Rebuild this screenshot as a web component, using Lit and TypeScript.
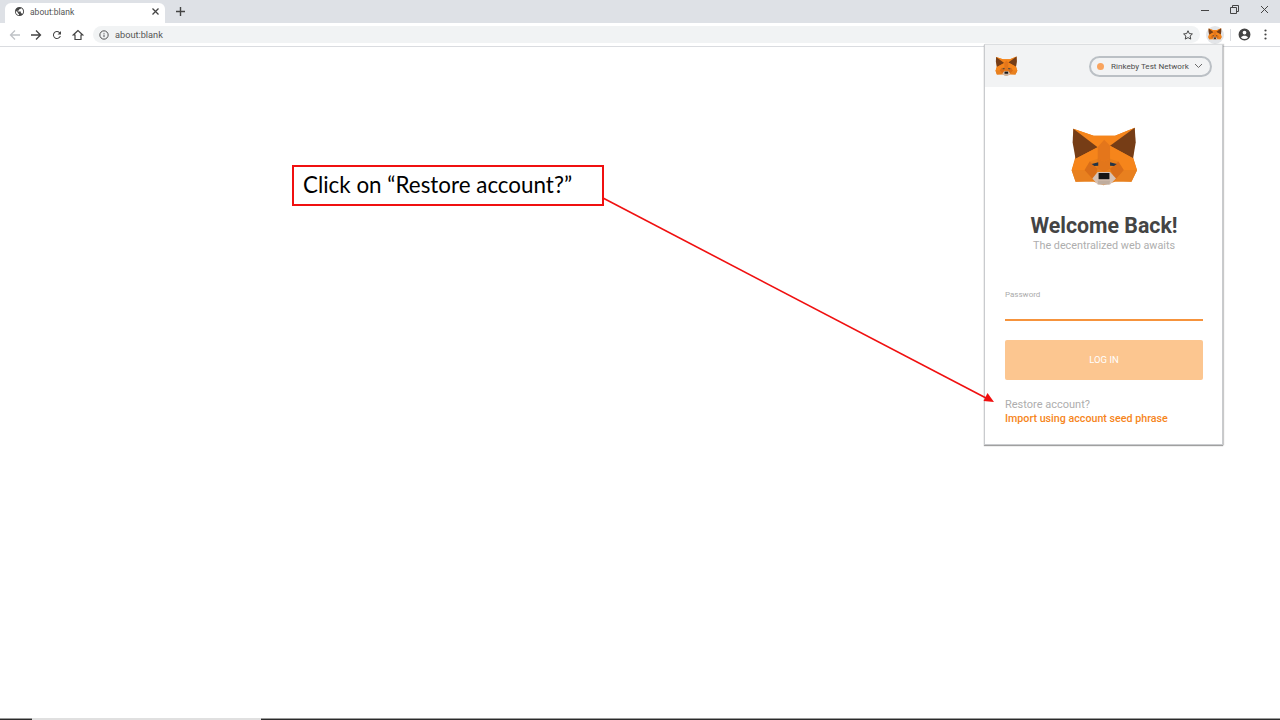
import { LitElement, html, css, svg } from "lit";
import { customElement, property } from "lit/decorators.js";

const foxShapes = svg`
  <polygon fill="#e8801c" points="38,28 100,50 165,50 225,25 220,115 232,155 215,190 165,190 130,200 100,190 45,190 33,155 44,115"/>
  <polygon fill="#f6851b" points="38,28 100,50 165,50 225,25 150,80 150,120 132,128 112,120 112,85"/>
  <polygon fill="#763d16" points="38,28 112,85 45,120 36,70"/>
  <polygon fill="#763d16" points="225,25 150,80 220,118 228,70"/>
  <polygon fill="#e4761b" points="112,85 112,120 132,128 150,120 150,80 132,62"/>
  <polygon fill="#f6851b" points="45,120 112,85 112,120 88,128 72,155 33,155"/>
  <polygon fill="#f6851b" points="220,118 150,80 150,120 175,128 192,155 232,155"/>
  <polygon fill="#d96d18" points="72,155 88,128 112,150 100,185"/>
  <polygon fill="#d96d18" points="192,155 175,128 150,150 165,185"/>
  <polygon fill="#e8801f" points="33,155 72,155 100,185 45,190"/>
  <polygon fill="#e8801f" points="232,155 192,155 165,185 215,190"/>
  <polygon fill="#e2761b" points="112,120 132,128 150,120 150,150 132,160 112,150"/>
  <polygon fill="#233447" points="94,136 114,130 114,141 102,142"/>
  <polygon fill="#233447" points="170,136 150,130 150,141 162,142"/>
  <polygon fill="#d7c1b3" points="96,180 112,160 150,160 168,180 150,198 112,198"/>
  <polygon fill="#161616" points="115,163 148,163 148,182 115,182"/>
  <polygon fill="#c0ad9e" points="112,186 150,186 148,198 114,198"/>
`;

@customElement("fox-logo")
class FoxLogo extends LitElement {
  @property({ type: Number }) size = 22;
  static styles = css`
    :host { display: flex; }
  `;
  render() {
    return html`<svg viewBox="28 20 210 185" width=${this.size} height=${(this.size * 185) / 210}>${foxShapes}</svg>`;
  }
}

@customElement("mm-popup")
class MmPopup extends LitElement {
  static styles = css`
    :host {
      display: flex;
      flex-direction: column;
      width: 239px;
      height: 401px;
      box-sizing: border-box;
      background: #fff;
      border: 1px solid #c9cbce;
      border-top-color: #dcdee0;
      box-shadow: 0 1px 1px 0 rgba(90, 90, 90, 0.55), 1px 0 1px 0 rgba(90, 90, 90, 0.25);
      font-family: Roboto, "Liberation Sans", sans-serif;
    }
    .head {
      height: 42px;
      background: #f2f3f4;
      display: flex;
      align-items: center;
      justify-content: space-between;
      padding: 0 10px 0 10px;
    }
    .net {
      width: 123px;
      height: 21px;
      box-sizing: border-box;
      border: 2px solid #bbc0c5;
      border-radius: 11px;
      display: flex;
      align-items: center;
      padding-left: 6px;
      font-size: 8.1px;
      color: #4d4d4d;
      white-space: nowrap;
    }
    .dot {
      width: 7px;
      height: 7px;
      border-radius: 50%;
      background: #f9a45e;
      margin-right: 7px;
      flex: none;
    }
    .net svg { margin: 0 7px 0 auto; flex: none; }
    .body {
      flex: 1;
      display: flex;
      flex-direction: column;
      padding: 0 19px 0 20px;
    }
    .big { align-self: center; margin-top: 39px; }
    h1 {
      margin: 26px 0 0;
      font-size: 21.3px;
      line-height: 26px;
      font-weight: 700;
      color: #444;
      text-align: center;
      white-space: nowrap;
    }
    .sub {
      font-size: 10.8px;
      line-height: 14px;
      color: #aeaeae;
      text-align: center;
      white-space: nowrap;
    }
    .label {
      margin-top: 37px;
      font-size: 8px;
      line-height: 10px;
      color: #aaa;
    }
    .line {
      margin-top: 19px;
      height: 2px;
      background: #f6933c;
    }
    .btn {
      margin-top: 19px;
      height: 40px;
      border-radius: 2px;
      background: #fcc690;
      color: #fff;
      font-size: 9.5px;
      display: flex;
      align-items: center;
      justify-content: center;
    }
    .restore {
      margin-top: 18px;
      font-size: 11px;
      line-height: 14px;
      color: #aeaeae;
    }
    .import {
      font-size: 10.7px;
      line-height: 14px;
      font-weight: 500;
      color: #f6851b;
      white-space: nowrap;
    }
  `;
  render() {
    return html`
      <div class="head">
        <fox-logo size="23"></fox-logo>
        <div class="net">
          <span class="dot"></span>Rinkeby Test Network
          <svg width="9" height="6" viewBox="0 0 9 6"><path d="M1 1l3.5 3.5L8 1" fill="none" stroke="#6a6a6a" stroke-width="1"/></svg>
        </div>
      </div>
      <div class="body">
        <fox-logo class="big" size="69"></fox-logo>
        <h1>Welcome Back!</h1>
        <div class="sub">The decentralized web awaits</div>
        <div class="label">Password</div>
        <div class="line"></div>
        <div class="btn">LOG IN</div>
        <div class="restore">Restore account?</div>
        <div class="import">Import using account seed phrase</div>
      </div>
    `;
  }
}

@customElement("app-root")
class AppRoot extends LitElement {
  static styles = css`
    :host {
      display: flex;
      flex-direction: column;
      width: 1280px;
      height: 720px;
      position: relative;
      overflow: hidden;
      background: #fff;
      font-family: Roboto, "Liberation Sans", sans-serif;
    }
    .tabstrip {
      height: 23px;
      background: #dee1e6;
      display: flex;
      align-items: flex-end;
      padding-left: 5px;
    }
    .tab {
      width: 160px;
      height: 20px;
      box-sizing: border-box;
      background: #fff;
      border-radius: 6px 6px 0 0;
      display: flex;
      align-items: center;
      padding: 0 5px 3px 9px;
      font-size: 8.5px;
      color: #555;
    }
    .tab .title { flex: 1; margin-left: 5px; }
    .plus { margin-left: 10px; margin-bottom: 6px; display: flex; }
    .winctl {
      margin-left: auto;
      align-self: flex-start;
      display: flex;
      align-items: center;
      height: 19px;
      gap: 21px;
      padding-right: 11px;
    }
    .toolbar {
      height: 23px;
      background: #fff;
      border-bottom: 1px solid #dadce0;
      display: flex;
      align-items: center;
      padding-left: 9px;
      gap: 9px;
    }
    .omni {
      width: 1107px;
      height: 17px;
      background: #f1f3f4;
      border-radius: 9px;
      display: flex;
      align-items: center;
      padding: 0 6px;
      box-sizing: border-box;
      font-size: 9.2px;
      color: #555;
    }
    .omni .url { margin-left: 6px; flex: 1; }
    .ext {
      width: 18px;
      height: 18px;
      border-radius: 50%;
      background: #e3e5e8;
      display: flex;
      align-items: center;
      justify-content: center;
      margin-left: -3px;
    }
    .sep { width: 1px; height: 12px; background: #dadce0; margin: 0 7px 0 6px; }
    .kebab { margin-left: 13px; }
    .right { display: flex; align-items: center; }
    main { flex: 1; }
    .taskbar {
      height: 2px;
      background: linear-gradient(#9a9a9a 50%, #2b2b2b 50%);
      display: flex;
      padding-left: 32px;
    }
    .taskbar i { width: 229px; background: #e0e0e0; }
    .popup { position: absolute; left: 984px; top: 44px; }
    .callout {
      position: absolute;
      left: 292px;
      top: 165px;
      width: 312px;
      height: 41px;
      box-sizing: border-box;
      border: 2px solid #f01010;
      background: #fff;
      font-family: Lato, "Open Sans", sans-serif;
      font-size: 22.4px;
      color: #000;
      display: flex;
      align-items: center;
      padding: 0 0 2px 9px;
      white-space: nowrap;
    }
    .arrow { position: absolute; left: 0; top: 0; pointer-events: none; }
  `;
  render() {
    return html`
      <div class="tabstrip">
        <div class="tab">
          <svg width="11" height="11" viewBox="0 0 24 24"><path fill="#444" d="M12 2a10 10 0 100 20 10 10 0 000-20zM4 12c0-.6.1-1.2.2-1.8L9 15v1c0 1.1.9 2 2 2v2a8 8 0 01-7-8zm13.9 5.4A2 2 0 0016 16h-1v-3c0-.6-.4-1-1-1H8v-2h2c.6 0 1-.4 1-1V7h2c1.1 0 2-.9 2-2v-.4a8 8 0 012.9 12.8z"/></svg>
          <span class="title">about:blank</span>
          <svg width="9" height="9" viewBox="0 0 9 9"><path d="M1.5 1.5l6 6M7.5 1.5l-6 6" stroke="#444" stroke-width="1.3" fill="none"/></svg>
        </div>
        <div class="plus"><svg width="11" height="11" viewBox="0 0 11 11"><path d="M5.5 1v9M1 5.5h9" stroke="#444" stroke-width="1.4" fill="none"/></svg></div>
        <div class="winctl">
          <svg width="8" height="8" viewBox="0 0 8 8"><path d="M0 4.5h8" stroke="#444" stroke-width="1"/></svg>
          <svg width="9" height="9" viewBox="0 0 9 9"><path d="M.5 2.5h6v6h-6zM2.5 2.5v-2h6v6h-2" fill="none" stroke="#444" stroke-width="1"/></svg>
          <svg width="9" height="9" viewBox="0 0 9 9"><path d="M1 1l7 7M8 1l-7 7" stroke="#444" stroke-width="1" fill="none"/></svg>
        </div>
      </div>
      <div class="toolbar">
        <svg width="12" height="12" viewBox="0 0 12 12"><path d="M11 6H2M6 1.500L1.500 6 6 10.500" fill="none" stroke="#bfc2c6" stroke-width="1.300"/></svg>
        <svg width="12" height="12" viewBox="0 0 12 12"><path d="M1 6h9M6 1.500L10.500 6 6 10.500" fill="none" stroke="#444" stroke-width="1.300"/></svg>
        <svg width="12" height="12" viewBox="0 0 24 24"><path fill="#444" d="M17.650 6.350A8 8 0 1019.730 14h-2.080a6 6 0 11-1.410-6.240L13 11h7V4z"/></svg>
        <svg width="12" height="12" viewBox="0 0 24 24"><path fill="none" stroke="#444" stroke-width="2.400" d="M12 3L2.500 12H6v9h12v-9h3.500z"/></svg>
        <div class="omni">
          <svg width="10" height="10" viewBox="0 0 24 24"><circle cx="12" cy="12" r="10" fill="none" stroke="#444" stroke-width="2.200"/><path d="M12 11v6M12 7v2" stroke="#444" stroke-width="2.200"/></svg>
          <span class="url">about:blank</span>
          <svg width="12" height="12" viewBox="0 0 24 24"><path fill="none" stroke="#444" stroke-width="2" d="M12 3.500l2.600 5.700 6.200.7-4.600 4.200 1.300 6.100L12 17.200l-5.500 3 1.300-6.100-4.600-4.200 6.200-.7z"/></svg>
        </div>
        <div class="right">
          <div class="ext"><fox-logo size="14"></fox-logo></div>
          <div class="sep"></div>
          <svg width="13" height="13" viewBox="0 0 24 24"><path fill="#444" d="M12 1a11 11 0 100 22 11 11 0 000-22zm0 4a3.500 3.500 0 110 7 3.500 3.500 0 010-7zm0 15.500a8.500 8.500 0 01-6.500-3c1-2 4-3 6.500-3s5.500 1 6.500 3a8.500 8.500 0 01-6.500 3z"/></svg>
          <svg class="kebab" width="3" height="11" viewBox="0 0 3 11"><circle cx="1.500" cy="1.500" r="1.100" fill="#444"/><circle cx="1.500" cy="5.500" r="1.100" fill="#444"/><circle cx="1.500" cy="9.500" r="1.100" fill="#444"/></svg>
        </div>
      </div>
      <main></main>
      <div class="taskbar"><i></i></div>
      <div class="callout">Click on “Restore account?”</div>
      <mm-popup class="popup"></mm-popup>
      <svg class="arrow" width="1280" height="720" viewBox="0 0 1280 720">
        <path d="M603 198L986 398" stroke="#f01010" stroke-width="1.600" fill="none"/>
        <polygon points="994,402 983.500,401 987.500,393" fill="#f01010"/>
      </svg>
    `;
  }
}
